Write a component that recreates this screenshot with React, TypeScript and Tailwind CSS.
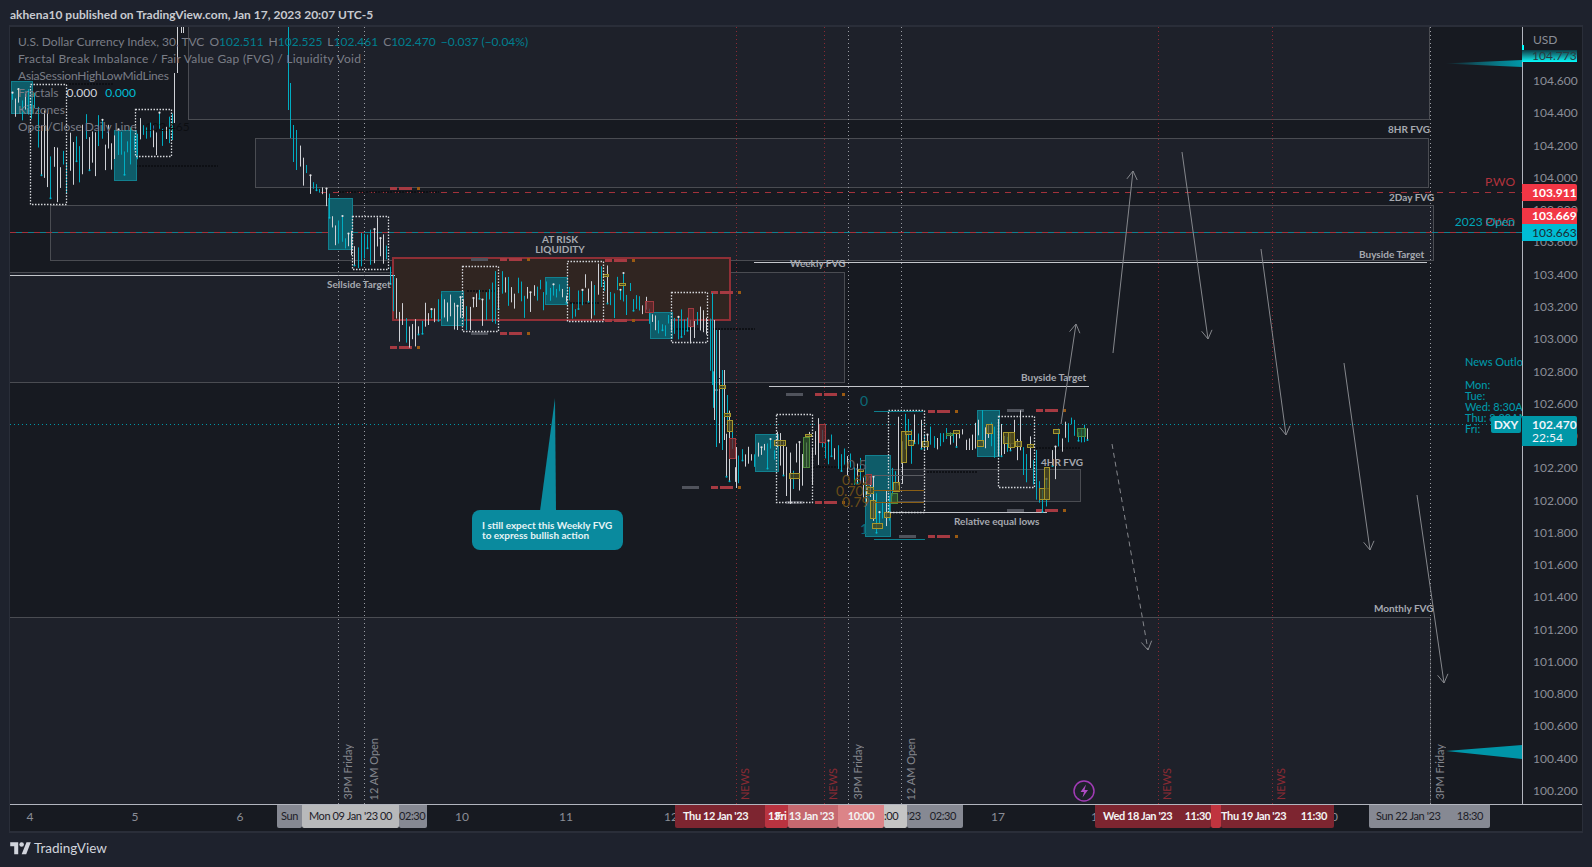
import React from 'react';

// price envelope of the candles, page coordinates: [x, top, bottom]
const ENVELOPE: number[][] = [
  [12, 85, 115], [30, 88, 125], [44, 100, 190], [50, 110, 205], [62, 150, 200], [72, 120, 185], [90, 110, 180],
  [105, 115, 170], [125, 125, 175], [140, 115, 155], [165, 110, 155], [172, 85, 140], [176, 85, 125], [183, 90, 120],
  [298, 140, 175], [302, 150, 185], [310, 170, 198], [318, 183, 197], [325, 187, 205],
  [330, 195, 240], [340, 210, 250], [350, 225, 262], [360, 225, 270], [370, 215, 265], [380, 215, 260], [388, 240, 280],
  [394, 270, 320], [400, 280, 345], [410, 315, 348], [420, 305, 345], [430, 300, 320], [440, 293, 325], [455, 290, 330],
  [470, 287, 330], [485, 287, 325], [497, 260, 335], [503, 262, 285], [515, 275, 335], [530, 283, 312], [545, 278, 310],
  [560, 275, 305], [575, 295, 322], [590, 262, 320], [604, 260, 305], [615, 270, 320], [625, 270, 315], [640, 290, 315],
  [650, 300, 325], [660, 312, 335], [672, 312, 338], [680, 300, 340], [695, 295, 345], [705, 310, 335], [712, 315, 420],
  [716, 340, 450], [722, 380, 470], [730, 400, 485], [735, 440, 490], [745, 440, 470], [760, 440, 465], [770, 430, 470],
  [780, 425, 480], [790, 435, 505], [800, 440, 500], [810, 425, 490], [818, 395, 470], [825, 420, 480], [835, 430, 470],
  [850, 450, 480], [865, 455, 500], [873, 470, 530], [880, 500, 540], [886, 480, 530], [892, 450, 510], [898, 415, 500],
  [905, 410, 470], [915, 410, 460], [925, 420, 450], [935, 428, 450], [950, 422, 445], [965, 430, 450], [980, 408, 450],
  [995, 412, 460], [1010, 420, 450], [1020, 410, 465], [1028, 425, 490], [1035, 440, 510], [1042, 465, 512],
  [1048, 450, 510], [1055, 425, 480], [1062, 425, 450], [1070, 415, 445], [1080, 425, 445], [1087, 415, 440],
];

// the spike out of the top of the chart, the fall back into it and the big drop of the 11th
const SPIKE: [number, number, number, boolean][] = [
  [174.5, 73, 123, true], [177.5, 27, 73, true], [181.5, 27, 33, true], [183.5, 27, 33, true],
  [288.5, 27, 110, false], [290.5, 83, 138, false], [293.5, 125, 162, false], [296.5, 130, 170, false],
  [712.5, 293, 385, false], [714.5, 320, 420, true], [716.5, 330, 447, false], [719.5, 330, 378, true],
  [722.5, 370, 450, false], [724.5, 370, 440, true], [727.5, 395, 430, false], [736.5, 447, 488, true],
];

function makeCandles() {
  let seed = 20230117;
  const rnd = () => {
    seed = (seed * 1664525 + 1013904223) % 4294967296;
    return seed / 4294967296;
  };
  const bars: { x: number; y1: number; y2: number; up: boolean; dot: number }[] = [];
  for (let x = 12; x < 1088; x += 3.2) {
    if (x > 172 && x < 298) continue;
    const i = ENVELOPE.findIndex((p) => p[0] > x);
    const a = ENVELOPE[Math.max(i - 1, 0)];
    const b = ENVELOPE[i < 0 ? ENVELOPE.length - 1 : i];
    const t = b[0] === a[0] ? 0 : (x - a[0]) / (b[0] - a[0]);
    const top = a[1] + (b[1] - a[1]) * t;
    const bottom = a[2] + (b[2] - a[2]) * t;
    const h = bottom - top;
    const y1 = top + rnd() * h * 0.55;
    const y2 = Math.min(bottom, y1 + h * (0.2 + rnd() * 0.65));
    bars.push({ x: Math.round(x) + 0.5, y1, y2, up: rnd() > 0.5, dot: rnd() });
  }
  SPIKE.forEach(([x, y1, y2, up]) => bars.push({ x: x + 0.01, y1, y2, up, dot: 0.5 }));
  return bars;
}

const CANDLES = makeCandles();

// teal killzone boxes
const SESSIONS = [
  [11, 81, 32, 113], [114, 130, 136, 180], [328, 198, 352, 249], [441, 291, 463, 325], [545, 277, 567, 304],
  [650, 312, 672, 338], [755, 434, 778, 471], [865, 455, 890, 536], [977, 410, 999, 456],
];

// white dotted fractal boxes
const DOTTED = [
  [30, 84, 66, 204], [135, 109, 171, 156], [352, 216, 388, 269], [462, 266, 498, 331], [567, 261, 603, 321],
  [671, 292, 707, 342], [776, 414, 812, 502], [888, 410, 924, 512], [998, 416, 1034, 487],
];

// gray / red / orange dashes of the asia session lines: [x, y, gray part shows]
const DASHES: [number, number, boolean][] = [
  [361, 188, false], [361, 347, false], [471, 259, true], [471, 333, true], [576, 260, false], [576, 320, false],
  [682, 292, false], [682, 487, true], [786, 394, true], [786, 502, true], [899, 411, false], [899, 536, true],
  [1007, 410, true], [1007, 510, true],
];

// small candles picked out by the indicator: [x1, y1, x2, y2, colour]
const MARKED: [number, number, number, number, string][] = [
  [719, 385, 725, 388, 'y'], [724, 413, 730, 416, 'y'], [727, 420, 732, 431, 'y'], [729, 438, 735, 458, 'r'],
  [774, 440, 785, 445, 'y'], [803, 437, 809, 467, 'g'], [805, 434, 811, 436, 'y'], [789, 473, 799, 478, 'y'],
  [819, 424, 825, 442, 'r'], [858, 469, 863, 471, 'y'], [866, 474, 871, 484, 'r'], [867, 487, 873, 493, 'y'],
  [870, 500, 875, 518, 'y'], [872, 523, 882, 528, 'y'], [884, 512, 890, 517, 'y'], [891, 493, 897, 503, 'g'],
  [893, 482, 899, 491, 'y'], [901, 431, 906, 462, 'y'], [905, 431, 911, 434, 'y'], [908, 440, 913, 445, 'y'],
  [922, 441, 928, 446, 'y'], [953, 430, 959, 433, 'y'], [946, 433, 952, 435, 'g'], [977, 440, 983, 446, 'y'],
  [986, 424, 992, 433, 'y'], [1003, 432, 1014, 443, 'y'], [1008, 432, 1014, 447, 'y'], [1015, 441, 1021, 446, 'y'],
  [1027, 444, 1033, 447, 'y'], [1039, 488, 1049, 499, 'y'], [1044, 467, 1049, 499, 'y'], [1053, 429, 1059, 433, 'y'],
  [1077, 428, 1085, 436, 'g'], [645, 301, 653, 312, 'r'], [688, 308, 693, 326, 'r'], [603, 274, 608, 276, 'y'],
  [619, 283, 625, 285, 'y'],
];

const MARK_COLORS: Record<string, [string, string]> = {
  y: ['#a6962c', '#4f4b1d'],
  r: ['#a03a40', '#6a2a2e'],
  g: ['#4f8a3c', '#2f5a2c'],
};

const PRICES = [
  '104.600', '104.400', '104.200', '104.000', '103.800', '103.600', '103.400', '103.200', '103.000', '102.800',
  '102.600', '102.400', '102.200', '102.000', '101.800', '101.600', '101.400', '101.200', '101.000', '100.800',
  '100.600', '100.400', '100.200',
];

function Arrow({ x1, y1, x2, y2, dashed }: { x1: number; y1: number; x2: number; y2: number; dashed?: boolean }) {
  const angle = Math.atan2(y2 - y1, x2 - x1);
  const head = (da: number) => `${x2 - 10 * Math.cos(angle + da)},${y2 - 10 * Math.sin(angle + da)}`;
  return (
    <g stroke="#85878c" strokeWidth="1" fill="none">
      <line x1={x1} y1={y1} x2={x2} y2={y2} strokeDasharray={dashed ? '5 4' : undefined} />
      <polyline points={`${head(0.55)} ${x2},${y2} ${head(-0.55)}`} />
    </g>
  );
}

function ChartDrawing() {
  return (
    <svg className="absolute inset-0" width="1512" height="777" viewBox="10 27 1512 777">
      <defs>
        <linearGradient id="wedge" x1="0" x2="1" y1="0" y2="0">
          <stop offset="0" stopColor="#00bcd4" stopOpacity="0" />
          <stop offset="1" stopColor="#0097a7" />
        </linearGradient>
      </defs>

      {/* fair value gap boxes */}
      <g stroke="#4a4c52" strokeWidth="1" fill="#1e212a" shapeRendering="crispEdges">
        <rect x="188.5" y="20" width="1241" height="99.5" />
        <rect x="255.5" y="138.5" width="1173" height="49" />
        <rect x="50.5" y="205.5" width="1383" height="55" />
        <rect x="9.5" y="272.5" width="835" height="110" />
        <rect x="9.5" y="617.5" width="1421" height="200" />
        <rect x="889.5" y="469.5" width="191" height="32" fill="#21242c" />
      </g>

      {/* at risk liquidity */}
      <rect x="393" y="258" width="337" height="62" fill="#302521" stroke="#8f2f36" strokeWidth="2" />

      {/* session levels */}
      <g shapeRendering="crispEdges">
        <line x1="321" y1="192.5" x2="1522" y2="192.5" stroke="#a3323b" strokeDasharray="6 6" />
        <line x1="10" y1="232.5" x2="1522" y2="232.5" stroke="#a3323b" strokeDasharray="6 6" />
        <line x1="16" y1="232.5" x2="1522" y2="232.5" stroke="#11808f" strokeDasharray="6 6" />
        <line x1="10" y1="424.5" x2="1522" y2="424.5" stroke="#0097a7" strokeDasharray="1 3" />
        <line x1="10" y1="275.5" x2="395" y2="275.5" stroke="#c4c6cb" />
        <line x1="754" y1="262.5" x2="1427" y2="262.5" stroke="#c4c6cb" />
        <line x1="769" y1="386.5" x2="1089" y2="386.5" stroke="#c4c6cb" />
        <line x1="884" y1="512.5" x2="1047" y2="512.5" stroke="#c4c6cb" />
      </g>

      {/* day and news separators */}
      <g shapeRendering="crispEdges" strokeWidth="1" strokeDasharray="1 3">
        {[338, 364, 848, 901, 1430].map((x) => (
          <line key={x} x1={x + 0.5} y1="27" x2={x + 0.5} y2="804" stroke="#9a9ca3" />
        ))}
        {[736, 824, 1158, 1272].map((x) => (
          <line key={x} x1={x + 0.5} y1="27" x2={x + 0.5} y2="804" stroke="#8a2a33" />
        ))}
      </g>

      {/* dark midlines */}
      <g stroke="#0b0d11" strokeWidth="2" strokeDasharray="2 1" opacity="0.8">
        {[
          [60, 114, 84], [136, 218, 166], [339, 439, 192], [467, 497, 291], [570, 600, 303], [673, 755, 329],
          [813, 863, 467], [927, 977, 472], [1033, 1080, 448],
        ].map(([a, b, y]) => (
          <line key={a} x1={a} y1={y} x2={b} y2={y} />
        ))}
      </g>

      {/* asia session dashes */}
      {DASHES.map(([x, y, gray]) => (
        <g key={`${x}-${y}`} shapeRendering="crispEdges">
          {gray && <rect x={x} y={y - 1} width="17" height="3" fill="#50535c" />}
          <rect x={x + 29} y={y - 1} width="7" height="3" fill="#a63a42" />
          <rect x={x + 38} y={y - 1} width="13" height="3" fill="#a63a42" />
          <rect x={x + 56} y={y - 1} width="3" height="3" fill="#9a5a12" />
        </g>
      ))}

      {/* killzones */}
      {SESSIONS.map(([a, b, c, d]) => (
        <rect key={a} x={a + 0.5} y={b + 0.5} width={c - a} height={d - b} fill="#0e5c69" stroke="#12808f" />
      ))}

      {/* candles */}
      {CANDLES.map((c) => (
        <g key={c.x}>
          <line x1={c.x} y1={c.y1} x2={c.x} y2={c.y2} stroke={c.up ? '#cfd1d6' : '#00acc1'} strokeWidth="1" />
          {c.dot < 0.14 && <circle cx={c.x} cy={c.y1} r="1.1" fill="#e4e5e8" />}
          {c.dot > 0.88 && <circle cx={c.x} cy={c.y2} r="1" fill="#00bcd4" />}
        </g>
      ))}

      {MARKED.map(([a, b, c, d, k]) => (
        <rect
          key={`${a}-${b}`}
          x={a + 0.5}
          y={b + 0.5}
          width={c - a}
          height={d - b}
          fill={MARK_COLORS[k][1]}
          fillOpacity="0.75"
          stroke={MARK_COLORS[k][0]}
        />
      ))}

      {/* fractal boxes */}
      {DOTTED.map(([a, b, c, d]) => (
        <rect
          key={a}
          x={a + 0.5}
          y={b + 0.5}
          width={c - a}
          height={d - b}
          fill="none"
          stroke="#d4d6da"
          strokeWidth="1.3"
          strokeDasharray="1.5 1.5"
        />
      ))}

      {/* fib levels */}
      <g shapeRendering="crispEdges">
        <line x1="874" y1="411.5" x2="923" y2="411.5" stroke="#0e7f8e" />
        <line x1="874" y1="539.5" x2="925" y2="539.5" stroke="#0e7f8e" />
        <line x1="873" y1="490.5" x2="924" y2="490.5" stroke="#8a5f15" />
        <line x1="873" y1="502.5" x2="924" y2="502.5" stroke="#8a5f15" />
        <line x1="873" y1="475.5" x2="924" y2="475.5" stroke="#5a5c62" />
      </g>

      {/* projected path */}
      <Arrow x1={1113} y1={353} x2={1133} y2={171} />
      <Arrow x1={1182} y1={152} x2={1208} y2={339} />
      <Arrow x1={1261} y1={249} x2={1286} y2={435} />
      <Arrow x1={1344} y1={363} x2={1370} y2={550} />
      <Arrow x1={1417} y1={495} x2={1444} y2={683} />
      <Arrow x1={1061} y1={424} x2={1076} y2={324} />
      <Arrow x1={1112} y1={444} x2={1148} y2={650} dashed />

      {/* wedges pointing at the axis */}
      <polygon points="1444,63.5 1522,60 1522,67" fill="url(#wedge)" />
      <polygon points="1446,751 1522,745 1522,759" fill="#0095a8" />

      {/* callout tail */}
      <polygon points="540,511 556,511 555,398" fill="#0a8a9e" />

      {/* news lightning */}
      <circle cx="1084" cy="791" r="10" fill="#1e212a" stroke="#a13bb5" strokeWidth="1.5" />
      <path d="M1086 784.5 L1080.5 792 H1084 L1082.5 797.5 L1088 790 H1084.5 Z" fill="#b04cc4" />
    </svg>
  );
}

// label colour used for the typed chart notes
const note = 'absolute -translate-y-1/2 whitespace-nowrap text-[10px] font-bold leading-none text-[#a6a9b0]';
const vertical = 'absolute bottom-[4px] rotate-180 whitespace-nowrap text-[11px] leading-none [writing-mode:vertical-rl]';

function Chart() {
  return (
    <div className="relative h-[777px] w-[1512px] shrink-0 overflow-hidden bg-[#171a21]">
      <ChartDrawing />

      {/* legend */}
      <div className="absolute left-[8px] top-[6px] flex flex-col whitespace-nowrap text-[12px] leading-[17px] text-[#7a7d86]">
        <div className="flex gap-[5px]">
          <span>U.S. Dollar Currency Index, 30, TVC</span>
          <span>
            O<span className="text-[#007f8f]">102.511</span>
          </span>
          <span>
            H<span className="text-[#007f8f]">102.525</span>
          </span>
          <span>
            L<span className="text-[#007f8f]">102.461</span>
          </span>
          <span>
            C<span className="text-[#007f8f]">102.470</span>
          </span>
          <span className="text-[#007f8f]">−0.037 (−0.04%)</span>
        </div>
        <div className="tracking-[0.25px]">Fractal Break Imbalance / Fair Value Gap (FVG) / Liquidity Void</div>
        <div className="tracking-[-0.2px]">AsiaSessionHighLowMidLines</div>
        <div className="flex gap-[8px]">
          <span>Fractals</span>
          <span className="text-[#d1d4dc]">0.000</span>
          <span className="text-[#00bcd4]">0.000</span>
        </div>
        <div>Killzones</div>
        <div>Open/Close Daily Line</div>
      </div>
      <span className="absolute left-[135px] top-[94px] text-[12px] leading-none text-[#0c0e12]">102.465</span>

      {/* notes on the chart */}
      <span className={`${note} left-[317px] top-[257px]`}>Sellside Target</span>
      <span className={`${note} left-[550px] top-[212px] -translate-x-1/2`}>AT RISK</span>
      <span className={`${note} left-[550px] top-[222px] -translate-x-1/2`}>LIQUIDITY</span>
      <span className={`${note} left-[780px] top-[236px]`}>Weekly FVG</span>
      <span className={`${note} left-[1349px] top-[227px]`}>Buyside Target</span>
      <span className={`${note} left-[1378px] top-[102px]`}>8HR FVG</span>
      <span className={`${note} left-[1379px] top-[170px]`}>2Day FVG</span>
      <span className={`${note} left-[1364px] top-[581px]`}>Monthly FVG</span>
      <span className={`${note} left-[1011px] top-[350px]`}>Buyside Target</span>
      <span className={`${note} left-[1031px] top-[435px]`}>4HR FVG</span>
      <span className={`${note} left-[944px] top-[494px]`}>Relative equal lows</span>

      {/* fib labels */}
      <span className="absolute left-[850px] top-[367px] text-[14px] leading-none text-[#0b6a78]">0</span>
      <span className="absolute left-[837px] top-[431px] text-[14px] leading-none text-[#5a5c62]">0.5</span>
      <span className="absolute left-[832px] top-[446px] text-[14px] leading-none text-[#6b4d18]">0.62</span>
      <span className="absolute left-[826px] top-[457px] text-[14px] leading-none text-[#6b4d18]">0.705</span>
      <span className="absolute left-[832px] top-[468px] text-[14px] leading-none text-[#6b4d18]">0.79</span>
      <span className="absolute left-[850px] top-[495px] text-[14px] leading-none text-[#0b6a78]">1</span>

      {/* rotated markers */}
      <span className={`${vertical} left-[332px] text-[#85878e]`}>3PM Friday</span>
      <span className={`${vertical} left-[358px] text-[#85878e]`}>12 AM Open</span>
      <span className={`${vertical} left-[729px] text-[#8a2a33]`}>NEWS</span>
      <span className={`${vertical} left-[817px] text-[#8a2a33]`}>NEWS</span>
      <span className={`${vertical} left-[842px] text-[#85878e]`}>3PM Friday</span>
      <span className={`${vertical} left-[895px] text-[#85878e]`}>12 AM Open</span>
      <span className={`${vertical} left-[1151px] text-[#8a2a33]`}>NEWS</span>
      <span className={`${vertical} left-[1265px] text-[#8a2a33]`}>NEWS</span>
      <span className={`${vertical} left-[1424px] text-[#85878e]`}>3PM Friday</span>

      {/* level names */}
      <span className="absolute right-[7px] top-[149px] whitespace-nowrap text-[12px] leading-none text-[#b3333d]">P.WO</span>
      <span className="absolute right-[7px] top-[189px] whitespace-nowrap text-[12px] leading-none text-[#b3333d]">P.WO</span>
      <span className="absolute right-[7px] top-[189px] whitespace-nowrap text-[12px] leading-none text-[#00a5b8]">2023 Open</span>

      {/* news outlook table */}
      <div className="absolute left-[1455px] top-[329px] whitespace-nowrap text-[11px] font-medium leading-[11px] text-[#0097a7]">
        <div className="mb-[11px] leading-[12px]">News Outlook</div>
        <div>Mon:</div>
        <div>Tue:</div>
        <div>Wed: 8:30AM</div>
        <div>Thu: 8:30AM</div>
        <div>Fri:</div>
      </div>
      <div className="absolute right-[1px] top-[389px] flex h-[17px] w-[30px] items-center justify-center rounded-[2px] bg-[#0097a7] text-[12px] font-bold text-[#f0f3fa]">
        DXY
      </div>

      {/* callout */}
      <div className="absolute left-[462px] top-[483px] h-[40px] w-[151px] rounded-lg bg-[#0a8a9e] px-[10px] pt-[10px] text-[10px] font-bold leading-[10px] text-[#e6f4f6]">
        I still expect this Weekly FVG
        <br />
        to express bullish action
      </div>
    </div>
  );
}

function PriceAxis() {
  return (
    <div className="relative h-[777px] w-[60px] shrink-0 border-l border-[#b2b5be] bg-[#171a21] text-[12px] text-[#8b8e97]">
      <div className="flex h-[26px] items-center pl-[10px]">USD</div>
      <div className="h-[12px]" />
      {PRICES.map((p) => (
        <div key={p} className="flex h-[32.27px] items-center pl-[10px]">
          {p}
        </div>
      ))}

      {/* last value badges sit on top of the scale */}
      <div className="absolute -left-px top-[18px] h-[17px] w-[2px] bg-[#00ffff]" />
      <div className="absolute -left-px top-[23px] flex h-[12px] w-[55px] items-center bg-linear-to-b from-[#0a3b44] to-[#00ffff] pl-[10px] text-[#2a3a40]">
        104.773
      </div>
      <div className="absolute -left-px top-[157px] flex h-[17px] w-[55px] items-center rounded-r-[2px] bg-[#f23645] pl-[10px] font-bold text-white">
        103.911
      </div>
      <div className="absolute -left-px top-[181px] flex w-[55px] flex-col">
        <div className="flex h-[16px] items-center rounded-tr-[2px] bg-[#f23645] pl-[10px] font-bold text-white">103.669</div>
        <div className="flex h-[17px] items-center rounded-br-[2px] bg-[#00bcd4] pl-[10px] text-[#1b2a33]">103.663</div>
      </div>
      <div className="absolute -left-px top-[389px] flex h-[30px] w-[55px] flex-col justify-center rounded-r-[2px] bg-[#0097a7] pl-[10px] leading-[13px] text-[#f0f3fa]">
        <span className="font-bold">102.470</span>
        <span>22:54</span>
      </div>
    </div>
  );
}

const stampRow = 'absolute top-0 flex h-[23px] whitespace-nowrap text-[11px] tracking-[-0.4px]';
const stampCell = 'flex h-full items-center rounded-b-[2px]';

function TimeAxis() {
  return (
    <div className="relative flex h-[27px] w-[1572px] items-center border-t border-[#b2b5be] bg-[#171a21] pb-[3px] text-[12px] text-[#8b8e97]">
      <div className="w-10 text-center">4</div>
      <div className="ml-[65px] w-10 text-center">5</div>
      <div className="ml-[65px] w-10 text-center">6</div>
      <div className="ml-[182px] w-10 text-center">10</div>
      <div className="ml-[64px] w-10 text-center">11</div>
      <div className="ml-[65px] w-10 text-center">12</div>
      <div className="ml-[287px] w-10 text-center">17</div>
      <div className="ml-[60px] w-10 text-center">18</div>
      <div className="ml-[193px] w-10 text-center">20</div>

      {/* crosshair stamps of the vertical lines */}
      <div className={`${stampRow} left-[267px] text-[#1d2027]`}>
        <div className={`${stampCell} w-[25px] bg-[#868993] pl-[4px]`}>Sun</div>
        <div className={`${stampCell} w-[97px] justify-center bg-[#b8b9bb]`}>Mon 09 Jan &apos;23 00</div>
        <div className={`${stampCell} w-[28px] bg-[#868993]`}>02:30</div>
      </div>

      <div className={`${stampRow} left-[665px] font-bold text-[#f3f3f3]`}>
        <div className={`${stampCell} w-[90px] bg-[#7d2530] pl-[8px]`}>Thu 12 Jan &apos;23</div>
        <div className={`${stampCell} w-[23px] bg-[#b93340] pl-[3px]`}>13:</div>
        <div className={`${stampCell} w-[50px] bg-[#c5686f]`}>
          <span className="-ml-[13px]">Fri 13 Jan &apos;23</span>
        </div>
        <div className={`${stampCell} w-[46px] justify-center bg-[#dc8488]`}>10:00</div>
        <div className={`${stampCell} w-[23px] bg-[#c5c5c5] font-normal text-[#1d2027]`}>:00</div>
        <div className={`${stampCell} w-[56px] justify-between bg-[#868993] pr-[7px] font-normal text-[#1d2027]`}>
          <span>&apos;23</span>
          <span>02:30</span>
        </div>
      </div>

      <div className={`${stampRow} left-[1085px] font-bold text-[#f3f3f3]`}>
        <div className={`${stampCell} w-[116px] justify-between bg-[#7d2530] pl-[8px]`}>
          <span>Wed 18 Jan &apos;23</span>
          <span>11:30</span>
        </div>
        <div className={`${stampCell} w-[10px] bg-[#c0343f]`} />
        <div className={`${stampCell} w-[113px] justify-between bg-[#7d2530] pr-[7px]`}>
          <span>Thu 19 Jan &apos;23</span>
          <span>11:30</span>
        </div>
      </div>

      <div className={`${stampRow} left-[1359px] text-[#1d2027]`}>
        <div className={`${stampCell} w-[121px] justify-between bg-[#868993] px-[7px]`}>
          <span>Sun 22 Jan &apos;23</span>
          <span>18:30</span>
        </div>
      </div>
    </div>
  );
}

export default function App() {
  return (
    <div className="flex h-[867px] w-[1592px] flex-col overflow-hidden bg-[#1e222d] font-['Lato','Noto_Sans',sans-serif]">
      <div className="flex h-[25px] shrink-0 items-center pl-[10px] pt-[5px] text-[12px] font-bold text-[#c8cad0]">
        akhena10 published on TradingView.com, Jan 17, 2023 20:07 UTC-5
      </div>

      <div className="ml-[9px] w-[1574px] shrink-0 border-2 border-l-[1px] border-[#2a2e39]">
        <div className="flex">
          <Chart />
          <PriceAxis />
        </div>
        <TimeAxis />
      </div>

      <div className="flex items-center gap-[3px] pl-[10px] pt-[5px] text-[13.5px] text-[#d1d4dc]">
        <svg width="21" height="16" viewBox="0 0 36 28" fill="currentColor">
          <path d="M14 25H7V11H0V4h14v21zM28 25h-8L28.5 4H36L28 25z" />
          <circle cx="20" cy="8" r="4" />
        </svg>
        <span>TradingView</span>
      </div>
    </div>
  );
}
